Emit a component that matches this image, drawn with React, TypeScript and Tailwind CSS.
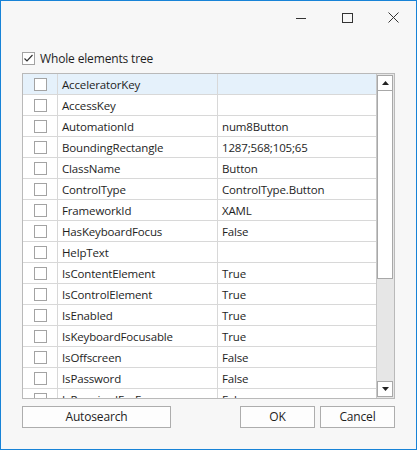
import React from 'react';

const rows: [string, string][] = [
  ['AcceleratorKey', ''],
  ['AccessKey', ''],
  ['AutomationId', 'num8Button'],
  ['BoundingRectangle', '1287;568;105;65'],
  ['ClassName', 'Button'],
  ['ControlType', 'ControlType.Button'],
  ['FrameworkId', 'XAML'],
  ['HasKeyboardFocus', 'False'],
  ['HelpText', ''],
  ['IsContentElement', 'True'],
  ['IsControlElement', 'True'],
  ['IsEnabled', 'True'],
  ['IsKeyboardFocusable', 'True'],
  ['IsOffscreen', 'False'],
  ['IsPassword', 'False'],
  ['IsRequiredForForm', 'False'],
];

const Box = ({ checked = false }: { checked?: boolean }) => (
  <div className="w-[13px] h-[13px] border border-[#a3a3a3] bg-white flex items-center justify-center shrink-0">
    {checked && (
      <svg width="11" height="11" viewBox="0 0 11 11">
        <path d="M1.5 5.5 L4 8 L9.5 2" fill="none" stroke="#333" strokeWidth="1.2" />
      </svg>
    )}
  </div>
);

const Btn = ({ label, w }: { label: string; w: string }) => (
  <div className={`${w} h-[22px] border border-[#adadad] bg-[#fdfdfd] flex items-center justify-center text-[12px] tracking-[-0.15px] text-[#1e1e1e]`}>
    {label}
  </div>
);

export default function App() {
  return (
    <div
      className="w-[417px] h-[450px] border border-[#1883d7] bg-[#f7f7f7] flex flex-col text-[#1e1e1e]"
      style={{ fontFamily: '"Segoe UI", "Open Sans", "Noto Sans", sans-serif' }}
    >
      {/* title bar */}
      <div className="h-[33px] flex justify-end items-start shrink-0">
        <div className="w-[46px] h-[33px] flex items-center justify-center">
          <div className="w-[10px] h-px bg-[#333] mt-[1px]" />
        </div>
        <div className="w-[46px] h-[33px] flex items-center justify-center">
          <div className="w-[11px] h-[10px] border border-[#333]" />
        </div>
        <div className="w-[46px] h-[33px] flex items-center justify-center">
          <svg width="11" height="11" viewBox="0 0 11 11">
            <path d="M0.5 0.5 L10.5 10.5 M10.5 0.5 L0.5 10.5" stroke="#333" strokeWidth="1" />
          </svg>
        </div>
      </div>

      <div className="px-[21px] flex flex-col">
        {/* whole elements tree */}
        <div className="h-[13px] mt-[18px] flex items-center gap-[5px]">
          <Box checked />
          <span className="text-[12px] tracking-[-0.15px] leading-none pt-[1px]">Whole elements tree</span>
        </div>

        {/* grid */}
        <div className="mt-[8px] h-[326px] border border-[#b9b9b9] bg-white flex">
          <div className="w-[354px] overflow-hidden">
            {rows.map(([k, v], i) => (
              <div
                key={k}
                className={`h-[21px] flex border-b border-[#d8d8d8] text-[11.5px] tracking-[-0.15px] ${i === 0 ? 'bg-[#e5f1fb]' : 'bg-white'}`}
              >
                <div className="w-[35px] shrink-0 border-r border-[#d8d8d8] flex items-center justify-center pl-[1px]">
                  <Box />
                </div>
                <div className="w-[160px] shrink-0 border-r border-[#d8d8d8] flex items-center pl-[4px] pt-[1px]">{k}</div>
                <div className="flex-1 flex items-center pl-[4px] pt-[1px]">{v}</div>
              </div>
            ))}
          </div>
          {/* scrollbar */}
          <div className="w-[18px] border-l border-[#c8c8c8] bg-[#e6e6e6] flex flex-col pr-[1px]">
            <div className="h-[16px] mt-[1px] border border-[#a8a8a8] bg-white flex items-center justify-center">
              <svg width="7" height="4" viewBox="0 0 7 4">
                <path d="M0 4 L3.5 0 L7 4 Z" fill="#222" />
              </svg>
            </div>
            <div className="h-[188px] border border-t-0 border-[#a8a8a8] bg-white" />
            <div className="flex-1" />
            <div className="h-[16px] mb-[1px] border border-[#a8a8a8] bg-white flex items-center justify-center">
              <svg width="7" height="4" viewBox="0 0 7 4">
                <path d="M0 0 L7 0 L3.5 4 Z" fill="#222" />
              </svg>
            </div>
          </div>
        </div>

        {/* buttons */}
        <div className="mt-[7px] flex">
          <Btn label="Autosearch" w="w-[149px]" />
          <div className="flex-1" />
          <Btn label="OK" w="w-[75px]" />
          <div className="w-[5px]" />
          <Btn label="Cancel" w="w-[75px]" />
        </div>
      </div>
    </div>
  );
}
